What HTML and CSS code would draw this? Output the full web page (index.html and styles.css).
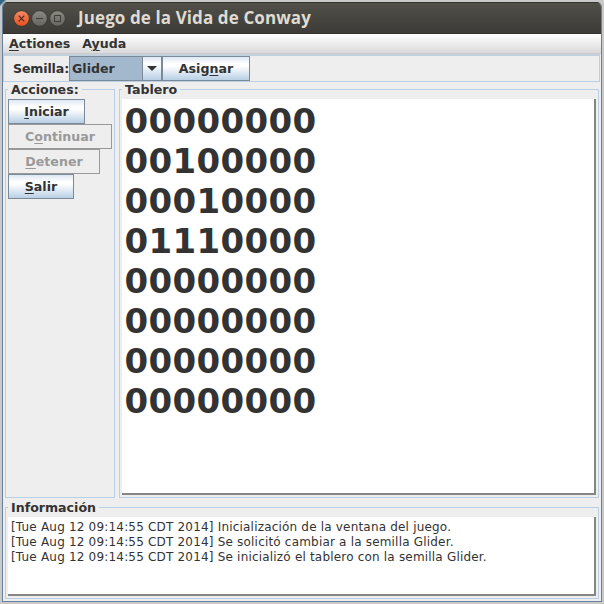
FILE: index.html
```html
<!DOCTYPE html>
<html lang="es">
<head>
<meta charset="utf-8">
<title>Juego de la Vida de Conway</title>
<link rel="stylesheet" href="styles.css">
</head>
<body>
<div class="window">
  <header class="titlebar">
    <svg class="controls" width="54" height="18" viewBox="0 0 54 18">
      <defs>
        <linearGradient id="red" x1="0" y1="0" x2="0" y2="1"><stop offset="0" stop-color="#f58b68"/><stop offset="1" stop-color="#e9501f"/></linearGradient>
        <linearGradient id="gray" x1="0" y1="0" x2="0" y2="1"><stop offset="0" stop-color="#8b8982"/><stop offset="1" stop-color="#66645e"/></linearGradient>
      </defs>
      <circle cx="8.5" cy="9.5" r="7.8" fill="url(#red)" stroke="#31302b" stroke-width=".7"/>
      <circle cx="26.5" cy="9.5" r="7.8" fill="url(#gray)" stroke="#31302b" stroke-width=".7"/>
      <circle cx="44.5" cy="9.5" r="7.8" fill="url(#gray)" stroke="#31302b" stroke-width=".7"/>
      <path d="M5.7 6.7l5.6 5.6M11.3 6.7l-5.6 5.6" stroke="#4b2a1c" stroke-width="1.2"/>
      <path d="M23 9.5h7M41.5 6.5h6v6h-6z" fill="none" stroke="#3c3b37"/>
    </svg>
    <h1 class="title">Juego de la Vida de Conway</h1>
  </header>
  <nav class="menubar"><span class="menu-actions"><u>A</u>ctiones</span><span class="menu-help">A<u>y</u>uda</span></nav>
  <div class="toolbar">
    <label class="seed-label">Semilla:</label>
    <div class="combo"><span class="combo-value">Glider</span><span class="combo-arrow"><svg width="10" height="5" viewBox="0 0 10 5"><path d="M0 0h10L5 5z" fill="#333"/></svg></span></div>
    <button class="button assign">Asig<u>n</u>ar</button>
  </div>
  <main class="content">
    <section class="panel actions">
      <h2 class="panel-title">Acciones:</h2>
      <button class="button start"><u>I</u>niciar</button>
      <button class="button continue" disabled>C<u>o</u>ntinuar</button>
      <button class="button stop" disabled><u>D</u>etener</button>
      <button class="button exit"><u>S</u>alir</button>
    </section>
    <section class="panel board">
      <h2 class="panel-title">Tablero</h2>
      <pre class="area cells">00000000
00100000
00010000
01110000
00000000
00000000
00000000
00000000</pre>
    </section>
  </main>
  <section class="panel info">
    <h2 class="panel-title">Información</h2>
    <pre class="area log">[Tue Aug 12 09:14:55 CDT 2014] Inicialización de la ventana del juego.
[Tue Aug 12 09:14:55 CDT 2014] Se solicitó cambiar a la semilla Glider.
[Tue Aug 12 09:14:55 CDT 2014] Se inicializó el tablero con la semilla Glider.</pre>
  </section>
</div>
</body>
</html>
```
FILE: styles.css
```css
* { box-sizing: border-box; }
body {
  margin: 0;
  height: 604px;
  padding: 2px;
  overflow: hidden;
  background: linear-gradient(135deg, #2b6787 0, #2b6787 3px, #c9c9c9 5px);
  color: #333;
  font: bold 12.6px "DejaVu Sans", sans-serif;
  letter-spacing: 0;
}
u { text-decoration-thickness: 1px; text-underline-offset: 2px; }
.window {
  display: flex;
  flex-direction: column;
  width: 600px;
  height: 600px;
  border: 1px solid #66809f;
  border-top: 0;
  border-radius: 5px 5px 0 0;
  overflow: hidden;
  background: #eee;
}
.titlebar {
  display: flex;
  align-items: center;
  height: 32px;
  padding-left: 10px;
  margin: 0 -1px;
  border: 1px solid #33322e;
  background: linear-gradient(#504f48, #3c3b37);
}
.title {
  margin: 0 0 0 11px;
  font: bold 17px/30px "Open Sans", sans-serif;
  letter-spacing: .1px;
  color: #dfdbd2;
}
.menubar {
  display: flex;
  height: 20px;
  padding-left: 6px;
  gap: 12px;
  line-height: 20px;
  background: linear-gradient(#fff, #dadada);
  border-bottom: 1px solid #ccc;
}
.toolbar {
  display: flex;
  height: 28px;
  padding: 0 0 0 9px;
  border: 1px solid #b8cfe5;
  border-top: 2px solid #c2cfdc;
  margin-right: 1px;
}
.seed-label { width: 56px; line-height: 26px; letter-spacing: -.15px; white-space: nowrap; }
.combo {
  display: flex;
  width: 93px;
  height: 25px;
  border: 1px solid #7a8a99;
  background: #a3b8cc;
}
.combo-value { width: 73px; padding-left: 2px; line-height: 24px; border-right: 1px solid #7a8a99; }
.combo-arrow {
  display: flex;
  flex: 1;
  align-items: center;
  justify-content: center;
  background: linear-gradient(#dde8f3, #fff 30%, #b8cfe5);
}
.button {
  display: block;
  height: 25px;
  padding: 0;
  border: 1px solid #7a8a99;
  border-radius: 0;
  color: #333;
  font: inherit;
  letter-spacing: inherit;
  line-height: 23px;
  background: linear-gradient(#dde8f3, #fff 30%, #fff 40%, #b8cfe5);
}
.button:disabled { color: #999; border-color: #999; background: #eee; }
.assign { width: 88px; }
.start { width: 77px; }
.continue { width: 104px; }
.stop { width: 92px; }
.exit { width: 66px; }
.content { display: flex; gap: 4px; margin: 7px 2px 0; height: 409px; }
.panel {
  display: flex;
  flex-direction: column;
  border: 1px solid #b8cfe5;
  padding: 0 2px 2px;
}
.panel-title {
  align-self: flex-start;
  margin: -8px 0 3px;
  padding: 1px 3px 0;
  height: 14px;
  font: inherit;
  line-height: 14px;
  background: #eee;
}
.actions { width: 110px; }
.board { flex: 1; }
.info { height: 92px; margin: 9px 2px 0; }
.area {
  flex: 1;
  margin: 0;
  background: #fff;
  border-right: 2px solid #858585;
  border-bottom: 2px solid #858585;
}
.cells {
  padding: 2px 0 0 2.6px;
  font: bold 34px/40px "DejaVu Sans", sans-serif;
  letter-spacing: .34px;
}
.log {
  padding: 3px 0 0 3px;
  font: 12px/15px "DejaVu Sans", sans-serif;
  letter-spacing: .19px;
}
```
